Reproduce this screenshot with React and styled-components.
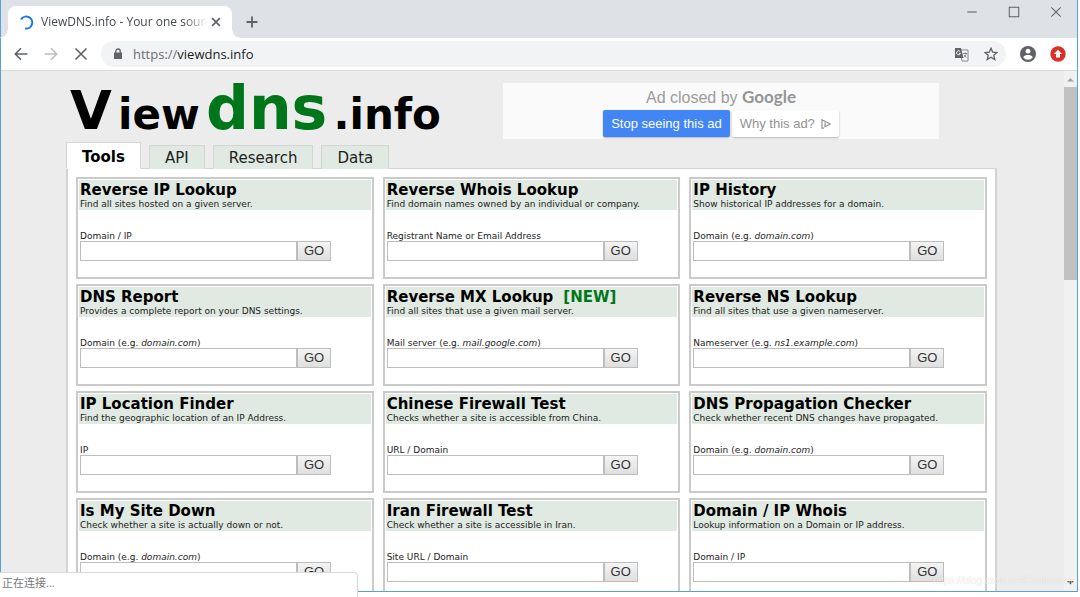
import React from "react";
import styled, { createGlobalStyle } from "styled-components";

const GlobalStyle = createGlobalStyle`
  * { box-sizing: border-box; }
  html, body, #root { height: 100%; }
  body { margin: 0; background: #fff; overflow: hidden; font-family: "DejaVu Sans", Verdana, sans-serif; color: #000; }
  button, input { font: inherit; margin: 0; }
  h2, p { margin: 0; }
`;

const Desktop = styled.div`
  height: 100%;
  padding: 0 2px 5px 0;
  position: relative;
`;

const Window = styled.div`
  height: 100%;
  display: flex;
  flex-direction: column;
  border: 1px solid #5b9fd8;
  border-top: 0;
`;

const TabStrip = styled.header`
  flex: none;
  height: 38px;
  display: flex;
  align-items: flex-end;
  padding-left: 7px;
  background: #dee1e6;
`;

const BrowserTab = styled.div`
  position: relative;
  width: 224px;
  height: 32px;
  display: flex;
  align-items: center;
  padding: 0 8px 0 11px;
  background: #fff;
  border-radius: 8px 8px 0 0;
  &::before, &::after {
    content: "";
    position: absolute;
    bottom: 0;
    width: 8px;
    height: 8px;
  }
  &::before { left: -8px; background: radial-gradient(circle at 0 0, transparent 7px, #fff 8px); }
  &::after { right: -8px; background: radial-gradient(circle at 100% 0, transparent 7px, #fff 8px); }
`;

const TabTitle = styled.span`
  flex: 1;
  margin-left: 7px;
  overflow: hidden;
  white-space: nowrap;
  font: 12px/16px "Open Sans", "Segoe UI", sans-serif;
  color: #45494d;
  mask-image: linear-gradient(to right, #000 86%, transparent);
`;

const IconButton = styled.button`
  display: flex;
  align-items: center;
  justify-content: center;
  width: ${(p) => p.$w || 30}px;
  height: ${(p) => p.$h || 30}px;
  padding: 0;
  border: 0;
  background: none;
  color: ${(p) => p.$color || "#5f6368"};
`;

const WindowButtons = styled.div`
  display: flex;
  align-self: flex-start;
  margin-left: auto;
`;

const Toolbar = styled.nav`
  flex: none;
  height: 33px;
  display: flex;
  align-items: center;
  padding: 0 4px 0 5px;
  background: #fff;
  border-bottom: 1px solid #dcdcdc;
`;

const AddressBar = styled.div`
  flex: 1;
  height: 26px;
  margin: 0 7px 0 5px;
  padding: 0 0 0 10px;
  display: flex;
  align-items: center;
  border-radius: 13px;
  background: #f1f3f4;
`;

const Address = styled.a`
  flex: 1;
  margin-left: 8px;
  color: #202124;
  text-decoration: none;
  font: 13px/20px "Open Sans", "Segoe UI", sans-serif;
  span { color: #6b6f74; }
`;

const Viewport = styled.div`
  flex: 1;
  min-height: 0;
  display: flex;
  background: #ececec;
`;

const Page = styled.main`
  flex: 1;
  overflow: hidden;
  padding: 12px 67px 0 65px;
`;

const Scrollbar = styled.div`
  width: 13px;
  display: flex;
  flex-direction: column;
  align-items: center;
  justify-content: space-between;
  background: #f1f1f1;
`;

const ScrollTop = styled.div`
  width: 100%;
  display: flex;
  flex-direction: column;
  align-items: center;
`;

const Thumb = styled.div`
  width: 100%;
  height: 193px;
  background: #c1c1c1;
`;

const Masthead = styled.div`
  display: flex;
  align-items: flex-start;
  justify-content: space-between;
  height: 59px;
  padding: 0 58px 0 4px;
`;

const Logo = styled.a`
  display: flex;
  align-items: baseline;
  width: 371px;
  justify-content: space-between;
  color: #000;
  text-decoration: none;
  font-weight: bold;
  line-height: 50px;
`;

const LogoPart = styled.span`
  font-size: ${(p) => p.$size}px;
  color: ${(p) => p.$color || "#000"};
`;

const Ad = styled.aside`
  width: 436px;
  height: 56px;
  padding-top: 4px;
  background: #fafafa;
  text-align: center;
  font-family: "Liberation Sans", Arial, sans-serif;
`;

const AdTitle = styled.p`
  font-size: 16px;
  line-height: 20px;
  color: #9c9c9c;
  strong { font-family: Lato, sans-serif; font-weight: bold; font-size: 17px; color: #959595; }
`;

const AdActions = styled.div`
  display: flex;
  justify-content: center;
  gap: 2px;
  margin-top: 2px;
`;

const AdButton = styled.button`
  height: 27px;
  display: flex;
  align-items: center;
  gap: 6px;
  padding: 0 8px;
  border: 0;
  border-radius: 2px;
  font-size: 13px;
  color: ${(p) => (p.$primary ? "#fff" : "#929292")};
  background: ${(p) => (p.$primary ? "#4285f4" : "#fff")};
  box-shadow: 0 1px 2px rgba(0, 0, 0, 0.3);
  white-space: nowrap;
`;

const SiteTabs = styled.nav`
  position: relative;
  z-index: 1;
  display: flex;
  align-items: flex-end;
  gap: 8px;
  height: 27px;
  margin-bottom: -1px;
`;

const SiteTab = styled.a`
  display: flex;
  align-items: center;
  justify-content: center;
  height: ${(p) => (p.$active ? 27 : 24)}px;
  padding: ${(p) => (p.$active ? "2px 15px 0" : "1px 15px 0")};
  border: 1px solid #d3d6d4;
  border-bottom-color: ${(p) => (p.$active ? "#fff" : "#dfe9e1")};
  background: ${(p) => (p.$active ? "#fff" : "#e0eae2")};
  font-size: 15px;
  font-weight: ${(p) => (p.$active ? "bold" : "normal")};
  color: ${(p) => (p.$active ? "#000" : "#1c1f1d")};
  text-decoration: none;
`;

const Panel = styled.section`
  border: 1px solid #d3d3d3;
  border-width: 1px 2px;
  background: #fff;
  padding: 8px 8px 20px;
  display: grid;
  grid-template-columns: repeat(3, 1fr);
  gap: 5px 9px;
`;

const Card = styled.form`
  height: 102px;
  border: 2px solid #cacaca;
  padding: 1px;
`;

const CardHeader = styled.div`
  height: 30px;
  padding-left: 1px;
  background: #e0eae2;
  white-space: nowrap;
`;

const CardTitle = styled.h2`
  font-size: 15px;
  line-height: 20px;
  span { color: #00761b; margin-left: 10px; }
`;

const CardText = styled.p`
  font-size: 9px;
  line-height: 8px;
  color: #222;
`;

const Field = styled.div`
  padding: 21px 0 0 1px;
  label { display: block; font-size: 9px; line-height: 10px; color: #222; }
`;

const FieldRow = styled.div`
  display: flex;
  height: 20px;
  input { width: 217px; min-width: 0; border: 1px solid #bdbdbd; background: #fff; padding: 0 4px; font-size: 11px; outline: 0; }
  button {
    width: 34px;
    padding: 0;
    border: 1px solid #bdbdbd;
    background: linear-gradient(#f4f4f4, #dfdfdf);
    font: 13px/16px "Liberation Sans", Arial, sans-serif;
    color: #333;
  }
`;

const StatusBubble = styled.div`
  position: absolute;
  left: 0;
  bottom: 0;
  width: 358px;
  height: 25px;
  padding-left: 2px;
  background: #fff;
  border: 1px solid #dadada;
  border-width: 1px 1px 0 0;
  border-radius: 0 4px 0 0;
  font: 11px/20px "Open Sans", "Noto Sans CJK SC", sans-serif;
  color: #74777a;
`;

const Watermark = styled.div`
  position: absolute;
  right: 7px;
  bottom: 8px;
  font: 10px/16px "Liberation Sans", Arial, sans-serif;
  color: rgba(255, 255, 255, 0.7);
  text-shadow: 0 0 1px rgba(0, 0, 0, 0.15);
`;

const tools = [
  ["Reverse IP Lookup", "Find all sites hosted on a given server.", "Domain / IP"],
  ["Reverse Whois Lookup", "Find domain names owned by an individual or company.", "Registrant Name or Email Address"],
  ["IP History", "Show historical IP addresses for a domain.", "Domain", "domain.com"],
  ["DNS Report", "Provides a complete report on your DNS settings.", "Domain", "domain.com"],
  ["Reverse MX Lookup", "Find all sites that use a given mail server.", "Mail server", "mail.google.com", true],
  ["Reverse NS Lookup", "Find all sites that use a given nameserver.", "Nameserver", "ns1.example.com"],
  ["IP Location Finder", "Find the geographic location of an IP Address.", "IP"],
  ["Chinese Firewall Test", "Checks whether a site is accessible from China.", "URL / Domain"],
  ["DNS Propagation Checker", "Check whether recent DNS changes have propagated.", "Domain", "domain.com"],
  ["Is My Site Down", "Check whether a site is actually down or not.", "Domain", "domain.com"],
  ["Iran Firewall Test", "Check whether a site is accessible in Iran.", "Site URL / Domain"],
  ["Domain / IP Whois", "Lookup information on a Domain or IP address.", "Domain / IP"],
];

function ToolCard({ id, title, text, label, example, isNew }) {
  return (
    <Card onSubmit={(e) => e.preventDefault()}>
      <CardHeader>
        <CardTitle>{title}{isNew && <span>[NEW]</span>}</CardTitle>
        <CardText>{text}</CardText>
      </CardHeader>
      <Field>
        <label htmlFor={id}>{label}{example && <> (e.g. <i>{example}</i>)</>}</label>
        <FieldRow>
          <input id={id} type="text" />
          <button type="submit">GO</button>
        </FieldRow>
      </Field>
    </Card>
  );
}

const Stroke = ({ d, size = 14, width = 1.6 }) => (
  <svg width={size} height={size} viewBox="0 0 14 14" fill="none" stroke="currentColor" strokeWidth={width}>
    <path d={d} />
  </svg>
);

export default function App() {
  return (
    <Desktop>
      <GlobalStyle />
      <Window>
        <TabStrip>
          <BrowserTab>
            <svg width="15" height="15" viewBox="0 0 15 15" fill="none" stroke="#1a73e8" strokeWidth="2">
              <path d="M2 4.6 A6 6 0 1 1 6.2 13.4" />
            </svg>
            <TabTitle>ViewDNS.info - Your one source for DNS</TabTitle>
            <IconButton $w={16} $h={16} aria-label="Close tab"><Stroke size={12} d="M2.5 2.5 11.5 11.5M11.5 2.5 2.5 11.5" width={2} /></IconButton>
          </BrowserTab>
          <IconButton $w={40} $h={33} aria-label="New tab"><Stroke d="M7 1.5V12.5M1.5 7H12.5" width={1.8} /></IconButton>
          <WindowButtons>
            <IconButton $w={42} $h={23} aria-label="Minimize"><Stroke size={12} d="M1.5 7H12.5" width={1.3} /></IconButton>
            <IconButton $w={42} $h={23} aria-label="Maximize"><Stroke size={12} d="M1.5 1.5H12.5V12.5H1.5Z" width={1.2} /></IconButton>
            <IconButton $w={42} $h={23} aria-label="Close"><Stroke size={12} d="M1.5 1.5 12.5 12.5M12.5 1.5 1.5 12.5" width={1.2} /></IconButton>
          </WindowButtons>
        </TabStrip>
        <Toolbar>
          <IconButton aria-label="Back"><Stroke d="M13.5 7H1.5M7 1.3 1.3 7 7 12.7" /></IconButton>
          <IconButton $color="#bcbec1" aria-label="Forward"><Stroke d="M.5 7H12.5M7 1.3 12.7 7 7 12.7" /></IconButton>
          <IconButton aria-label="Stop"><Stroke d="M1.5 1.5 12.5 12.5M12.5 1.5 1.5 12.5" /></IconButton>
          <AddressBar>
            <svg width="14" height="14" viewBox="0 0 14 14">
              <path d="M3 5.5H11V12H3Z" fill="#5f6368" />
              <path d="M4.8 6V4.2a2.2 2.2 0 0 1 4.4 0V6" fill="none" stroke="#5f6368" strokeWidth="1.3" />
            </svg>
            <Address href="https://viewdns.info"><span>https://</span>viewdns.info</Address>
            <IconButton aria-label="Translate">
              <svg width="15" height="15" viewBox="0 0 15 15">
                <path d="M6 3H14V14H8Z" fill="#f8f8f8" stroke="#85888c" />
                <path d="M1 1H7L9.5 11H1Z" fill="#5f6368" />
                <path d="M6.2 4.6A2 2 0 1 0 6.5 6.4H4.9" fill="none" stroke="#fff" strokeWidth=".9" />
                <path d="M9 6.5h4M11 5.3v1.2M12.2 6.5c-.3 1.8-1.3 3-2.4 3.8M10 8c.6 1.1 1.5 1.8 2.5 2.3" fill="none" stroke="#777a7e" strokeWidth=".9" />
              </svg>
            </IconButton>
            <IconButton aria-label="Bookmark">
              <svg width="14" height="14" viewBox="0 0 14 14">
                <path d="M7 1.2 8.7 5.1 13 5.5 9.8 8.3 10.8 12.6 7 10.3 3.2 12.6 4.2 8.3 1 5.5 5.3 5.1Z" fill="none" stroke="#5f6368" strokeWidth="1.3" />
              </svg>
            </IconButton>
          </AddressBar>
          <IconButton aria-label="Profile">
            <svg width="16" height="16" viewBox="0 0 16 16">
              <circle cx="8" cy="8" r="8" fill="#5f6368" />
              <circle cx="8" cy="5.2" r="2.4" fill="#fff" />
              <path d="M3.2 11.3C3.7 9.6 6.2 9 8 9S12.3 9.6 12.8 11.3A5.8 5.8 0 0 1 3.2 11.3Z" fill="#fff" />
            </svg>
          </IconButton>
          <IconButton aria-label="Update available">
            <svg width="16" height="16" viewBox="0 0 16 16">
              <circle cx="8" cy="8" r="7.7" fill="#d93025" />
              <path d="M8 3.7 12 8H10V11.5H6V8H4Z" fill="#fff" />
            </svg>
          </IconButton>
        </Toolbar>
        <Viewport>
          <Page>
            <Masthead>
              <Logo href="#" aria-label="Viewdns.info">
                <LogoPart $size={54}>V</LogoPart>
                <LogoPart $size={42}>iew</LogoPart>
                <LogoPart $size={60} $color="#00761b">dns</LogoPart>
                <LogoPart $size={42}>.info</LogoPart>
              </Logo>
              <Ad>
                <AdTitle>Ad closed by <strong>Google</strong></AdTitle>
                <AdActions>
                  <AdButton $primary>Stop seeing this ad</AdButton>
                  <AdButton>
                    Why this ad?
                    <svg width="10" height="10" viewBox="0 0 10 10" fill="none" stroke="#929292" strokeWidth="1.2">
                      <path d="M3 9.2H1V.8L9.2 5 4 7.7V3.5" />
                    </svg>
                  </AdButton>
                </AdActions>
              </Ad>
            </Masthead>
            <SiteTabs>
              <SiteTab href="#" $active>Tools</SiteTab>
              <SiteTab href="#">API</SiteTab>
              <SiteTab href="#">Research</SiteTab>
              <SiteTab href="#">Data</SiteTab>
            </SiteTabs>
            <Panel>
              {tools.map(([title, text, label, example, isNew], i) => (
                <ToolCard key={title} id={`tool-${i}`} {...{ title, text, label, example, isNew }} />
              ))}
            </Panel>
          </Page>
          <Scrollbar>
            <ScrollTop>
              <svg width="13" height="16" viewBox="0 0 13 16"><path d="M6.5 7 10 10.5H3Z" fill="#a3a3a3" /></svg>
              <Thumb />
            </ScrollTop>
            <svg width="13" height="16" viewBox="0 0 13 16"><path d="M3 6H10L6.5 9.5Z" fill="#505050" /></svg>
          </Scrollbar>
        </Viewport>
      </Window>
      <Watermark>https://blog.csdn.net/Eastmount</Watermark>
      <StatusBubble>正在连接...</StatusBubble>
    </Desktop>
  );
}
